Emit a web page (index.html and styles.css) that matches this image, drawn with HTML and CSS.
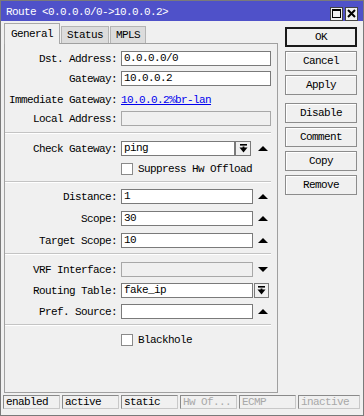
FILE: index.html
```html
<!DOCTYPE html>
<html lang="en">
<head>
<meta charset="UTF-8">
<title>Route &lt;0.0.0.0/0-&gt;10.0.0.2&gt;</title>
<link rel="stylesheet" href="styles.css">
</head>
<body>
<div class="window">
  <div class="titlebar">
    <span class="title">Route &lt;0.0.0.0/0-&gt;10.0.0.2&gt;</span>
    <div class="title-btns">
      <span class="tbtn">
        <svg width="9" height="9" viewBox="0 0 9 9"><rect x="0.5" y="0.5" width="8" height="8" fill="none" stroke="#000"/><rect x="0" y="0" width="9" height="2" fill="#000"/></svg>
      </span>
      <span class="tbtn">
        <svg width="9" height="9" viewBox="0 0 9 9"><path d="M1 1L8 8M8 1L1 8" stroke="#000" stroke-width="2"/></svg>
      </span>
    </div>
  </div>

  <div class="main">
    <div class="left">
      <div class="tabs">
        <div class="tab active">General</div>
        <div class="tab">Status</div>
        <div class="tab">MPLS</div>
      </div>
      <div class="panel">
        <div class="section s1">
          <div class="row"><label>Dst. Address:</label><div class="input wide">0.0.0.0/0</div></div>
          <div class="row"><label>Gateway:</label><div class="input wide">10.0.0.2</div></div>
          <div class="row text"><label>Immediate Gateway:</label><a class="link" href="#">10.0.0.2%br-lan</a></div>
          <div class="row"><label>Local Address:</label><div class="input wide disabled"></div></div>
        </div>
        <div class="sep"></div>
        <div class="section s2">
          <div class="row">
            <label>Check Gateway:</label><div class="input short">ping</div>
            <span class="drop"><svg width="9" height="9" viewBox="0 0 9 9"><rect x="1" y="0" width="7" height="1.6" fill="#000"/><path d="M0.5 3.5H8.5L4.5 8.5Z" fill="#000"/><rect x="3.6" y="2.5" width="1.8" height="3" fill="#000"/></svg></span>
            <span class="arrow up"></span>
          </div>
          <div class="row"><label></label><span class="check"></span><span class="check-label">Suppress Hw Offload</span></div>
        </div>
        <div class="sep"></div>
        <div class="section s3">
          <div class="row"><label>Distance:</label><div class="input mid">1</div><span class="arrow up"></span></div>
          <div class="row"><label>Scope:</label><div class="input mid">30</div><span class="arrow up"></span></div>
          <div class="row"><label>Target Scope:</label><div class="input mid">10</div><span class="arrow up"></span></div>
        </div>
        <div class="sep"></div>
        <div class="section s4">
          <div class="row"><label>VRF Interface:</label><div class="input mid disabled"></div><span class="arrow down"></span></div>
          <div class="row">
            <label>Routing Table:</label><div class="input mid">fake_ip</div>
            <span class="drop drop2"><svg width="9" height="9" viewBox="0 0 9 9"><rect x="1" y="0" width="7" height="1.6" fill="#000"/><path d="M0.5 3.5H8.5L4.5 8.5Z" fill="#000"/><rect x="3.6" y="2.5" width="1.8" height="3" fill="#000"/></svg></span>
          </div>
          <div class="row"><label>Pref. Source:</label><div class="input mid"></div><span class="arrow up"></span></div>
        </div>
        <div class="sep"></div>
        <div class="section s5">
          <div class="row"><label></label><span class="check"></span><span class="check-label">Blackhole</span></div>
        </div>
      </div>
    </div>

    <div class="buttons">
      <button class="default">OK</button>
      <button>Cancel</button>
      <button>Apply</button>
      <button class="spaced">Disable</button>
      <button>Comment</button>
      <button>Copy</button>
      <button>Remove</button>
    </div>
  </div>

  <div class="statusbar">
    <div class="cell">enabled</div>
    <div class="cell">active</div>
    <div class="cell">static</div>
    <div class="cell off">Hw Of...</div>
    <div class="cell off">ECMP</div>
    <div class="cell off last">inactive</div>
  </div>
</div>
</body>
</html>
```

FILE: styles.css
```css
body {
  margin: 0;
  font-family: "Liberation Mono", "DejaVu Sans Mono", monospace;
  font-size: 11px;
  letter-spacing: -0.6px;
  color: #000;
  background: #f0f0f0;
}
.window {
  width: 364px;
  height: 416px;
  box-sizing: border-box;
  border: 1px solid #7a7a7a;
  background: #f0f0f0;
  display: flex;
  flex-direction: column;
}
.titlebar {
  height: 20px;
  flex: none;
  background: #4f51c9;
  color: #fff;
  display: flex;
  align-items: center;
  padding-left: 5px;
  padding-top: 1px;
  box-sizing: border-box;
}
.title {
  flex: 1;
}
.title-btns {
  display: flex;
  gap: 2px;
  margin-right: 5px;
  margin-top: 4px;
}
.tbtn {
  width: 13px;
  height: 14px;
  box-sizing: border-box;
  background: #f0f0f0;
  border: 1px solid #444;
  display: flex;
  align-items: center;
  justify-content: center;
}

/* main area */
.main {
  display: flex;
  padding: 2px 0 0 3px;
}
.left {
  width: 274px;
}
.tabs {
  display: flex;
  height: 20px;
  gap: 1px;
}
.tab {
  height: 17px;
  margin-top: 3px;
  padding: 0 5px;
  box-sizing: border-box;
  background: #dcdcdc;
  border: 1px solid #b4b4b4;
  border-bottom: none;
  line-height: 16px;
}
.tab.active {
  height: 21px;
  margin-top: 0;
  padding: 0 6px;
  background: #f0f0f0;
  border-color: #a8a8a8;
  position: relative;
  z-index: 1;
  line-height: 21px;
}
.panel {
  height: 350px;
  box-sizing: border-box;
  border: 1px solid #a0a0a0;
}
.section {
  display: flex;
  flex-direction: column;
}
.s1 { padding: 7px 0 6px; gap: 5px; }
.s2 { padding: 7px 0 5px; gap: 5px; }
.s3 { padding: 6px 0 5px; gap: 7px; }
.s4 { padding: 7px 0 5px; gap: 6px; }
.s5 { padding: 6px 0 0; }
.sep {
  height: 0;
  margin-right: 6px;
  border-top: 1px solid #c4c4c4;
  border-bottom: 1px solid #fff;
}
.row {
  display: flex;
  align-items: center;
  height: 15px;
}
.row.text {
  align-items: flex-end;
}
.row label {
  width: 112px;
  margin-right: 4px;
  text-align: right;
  flex: none;
}
.input {
  height: 15px;
  box-sizing: border-box;
  background: #fff;
  border: 1px solid #7a7a7a;
  padding-left: 2px;
  line-height: 13px;
}
.input.disabled {
  background: #f0f0f0;
  border-color: #a8a8a8;
}
.input.wide { width: 150px; }
.input.mid { width: 132px; }
.input.short { width: 114px; }
.link {
  color: #0000ee;
  text-decoration: underline;
}
.drop {
  width: 16px;
  height: 15px;
  box-sizing: border-box;
  border: 1px solid #7a7a7a;
  background: #f0f0f0;
  display: flex;
  align-items: center;
  justify-content: center;
}
.drop2 {
  width: 15px;
  margin-left: 1px;
}
.arrow {
  width: 0;
  height: 0;
  margin-left: 5px;
  border-left: 5px solid transparent;
  border-right: 5px solid transparent;
}
.drop + .arrow {
  margin-left: 7px;
}
.arrow.up { border-bottom: 5px solid #000; }
.arrow.down { border-top: 5px solid #000; }
.check {
  width: 12px;
  height: 12px;
  box-sizing: border-box;
  background: #fff;
  border: 1px solid #8a8a8a;
  margin-right: 5px;
}

/* side buttons */
.buttons {
  display: flex;
  flex-direction: column;
  gap: 4px;
  margin-left: 7px;
  padding-top: 4px;
}
button {
  width: 72px;
  height: 20px;
  margin: 0;
  padding: 0;
  font: inherit;
  letter-spacing: inherit;
  color: #000;
  background: #f0f0f0;
  border: 1px solid #8c8c8c;
  box-shadow: inset 1px 1px 0 #fff;
}
button.default {
  border: 2px solid #1a1a1a;
  box-shadow: none;
}
button.spaced {
  margin-top: 4px;
}

/* status bar */
.statusbar {
  display: flex;
  gap: 2px;
  margin-top: 2px;
  padding-left: 2px;
  padding-right: 3px;
}
.cell {
  width: 57px;
  height: 14px;
  box-sizing: border-box;
  border: 1px solid #c8c8c8;
  border-top-color: #8a8a8a;
  border-left-color: #8a8a8a;
  padding-left: 2px;
  line-height: 12px;
}
.cell.off {
  color: #a8a8a8;
}
.cell.last {
  flex: 1;
}
```
